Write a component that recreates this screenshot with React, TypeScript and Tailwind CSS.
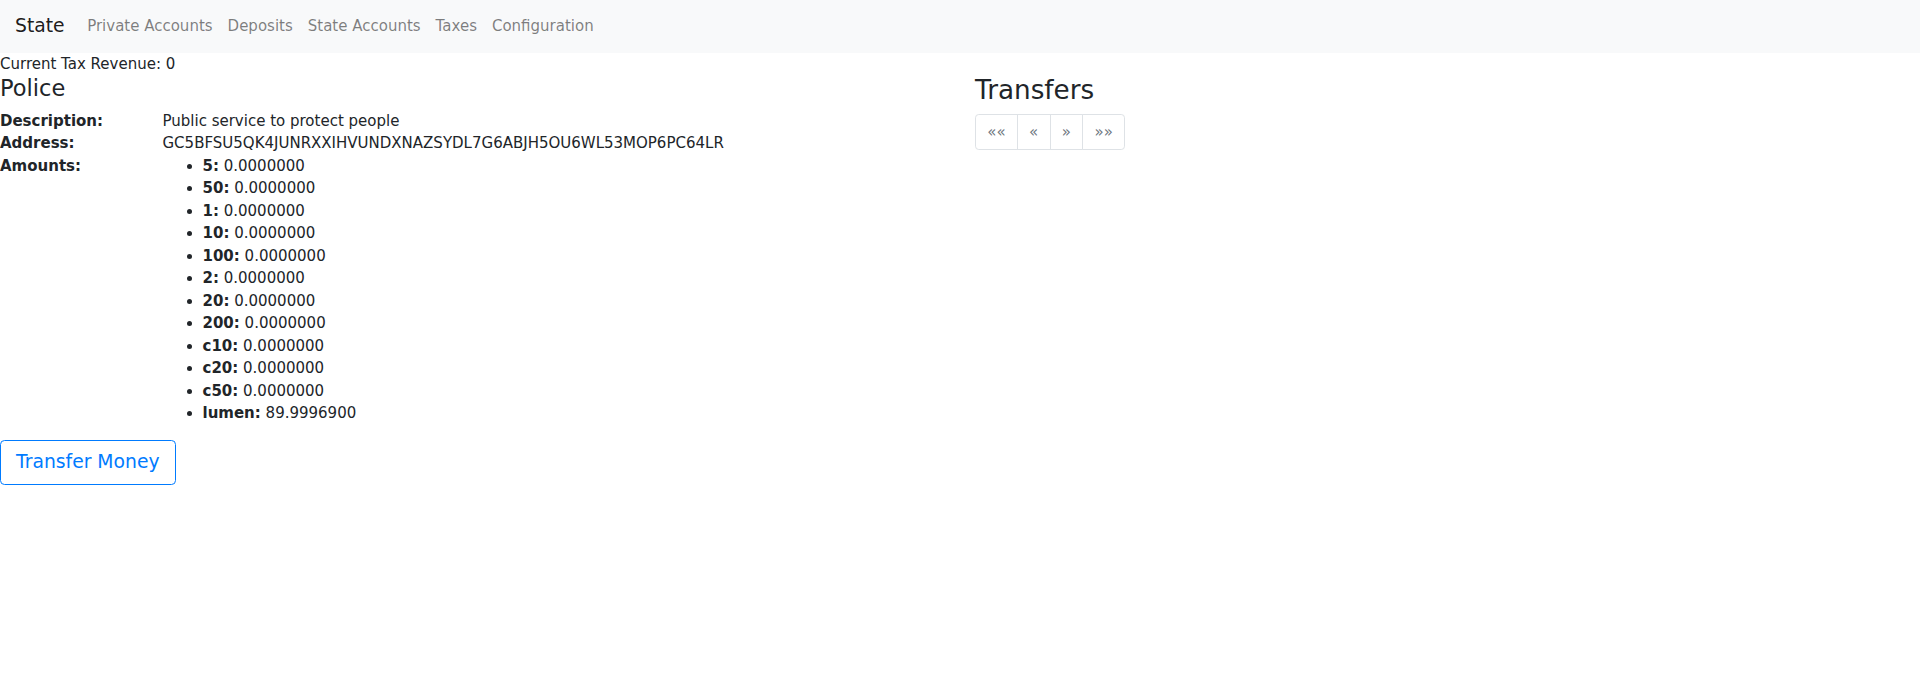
const navLinks = ["Private Accounts", "Deposits", "State Accounts", "Taxes", "Configuration"]

const amounts = [
  { key: "5", value: "0.0000000" },
  { key: "50", value: "0.0000000" },
  { key: "1", value: "0.0000000" },
  { key: "10", value: "0.0000000" },
  { key: "100", value: "0.0000000" },
  { key: "2", value: "0.0000000" },
  { key: "20", value: "0.0000000" },
  { key: "200", value: "0.0000000" },
  { key: "c10", value: "0.0000000" },
  { key: "c20", value: "0.0000000" },
  { key: "c50", value: "0.0000000" },
  { key: "lumen", value: "89.9996900" },
]

const pages = ["««", "«", "»", "»»"]

export default function App() {
  return (
    <div className="min-h-screen bg-white font-['DejaVu_Sans',sans-serif] text-[15px] leading-[1.5] text-[#212529]">
      {/* Navbar */}
      <nav className="flex items-center bg-[#f8f9fa] px-[15px] py-[7.5px]">
        <a className="mr-[15px] py-[4.6875px] text-[18.75px] leading-[1.5] text-black/90">State</a>
        <ul className="flex">
          {navLinks.map((link) => (
            <li key={link}>
              <a className="block px-[7.5px] py-[7.5px] text-black/50">{link}</a>
            </li>
          ))}
        </ul>
      </nav>

      <div>Current Tax Revenue: 0</div>

      <div className="grid grid-cols-2 gap-[30px]">
        {/* Account details */}
        <div>
          <h4 className="mb-[7.5px] text-[22.5px] font-medium leading-[1.2]">Police</h4>
          <dl className="grid grid-cols-[162.5px_1fr]">
            <dt className="font-bold">Description:</dt>
            <dd>Public service to protect people</dd>
            <dt className="font-bold">Address:</dt>
            <dd>GC5BFSU5QK4JUNRXXIHVUNDXNAZSYDL7G6ABJH5OU6WL53MOP6PC64LR</dd>
            <dt className="font-bold">Amounts:</dt>
            <dd>
              <ul className="mb-[15px] list-disc pl-[40px]">
                {amounts.map((a) => (
                  <li key={a.key}>
                    <b>{a.key}:</b> {a.value}
                  </li>
                ))}
              </ul>
            </dd>
          </dl>
          <button className="rounded-[4.5px] border border-[#007bff] px-[15px] py-[7.5px] text-[18.75px] leading-[1.5] text-[#007bff]">
            Transfer Money
          </button>
        </div>

        {/* Transfers */}
        <div>
          <h3 className="mb-[7.5px] text-[26.25px] font-medium leading-[1.2]">Transfers</h3>
          <ul className="flex">
            {pages.map((p, i) => (
              <li key={p}>
                <span
                  className={
                    "block border border-[#dee2e6] bg-white px-[11.25px] py-[7.5px] leading-[1.25] text-[#6c757d] " +
                    (i === 0 ? "rounded-l-[3.75px]" : "-ml-px") +
                    (i === pages.length - 1 ? " rounded-r-[3.75px]" : "")
                  }
                >
                  {p}
                </span>
              </li>
            ))}
          </ul>
        </div>
      </div>
    </div>
  )
}
